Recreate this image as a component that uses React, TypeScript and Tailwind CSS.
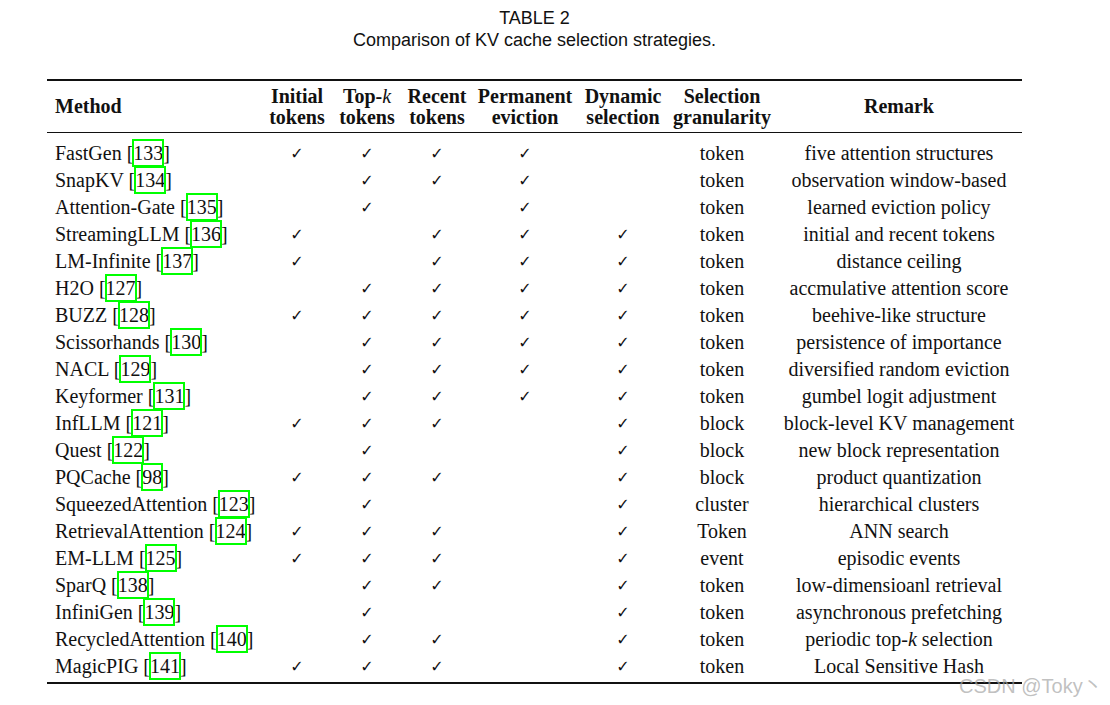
import React from "react";

type Row = [string, string, string, string, React.ReactNode];

const rows: Row[] = [
  ["FastGen", "133", "ITRP_", "token", "five attention structures"],
  ["SnapKV", "134", "_TRP_", "token", "observation window-based"],
  ["Attention-Gate", "135", "_T_P_", "token", "learned eviction policy"],
  ["StreamingLLM", "136", "I_RPD", "token", "initial and recent tokens"],
  ["LM-Infinite", "137", "I_RPD", "token", "distance ceiling"],
  ["H2O", "127", "_TRPD", "token", "accmulative attention score"],
  ["BUZZ", "128", "ITRPD", "token", "beehive-like structure"],
  ["Scissorhands", "130", "_TRPD", "token", "persistence of importance"],
  ["NACL", "129", "_TRPD", "token", "diversified random eviction"],
  ["Keyformer", "131", "_TRPD", "token", "gumbel logit adjustment"],
  ["InfLLM", "121", "ITR_D", "block", "block-level KV management"],
  ["Quest", "122", "_T__D", "block", "new block representation"],
  ["PQCache", "98", "ITR_D", "block", "product quantization"],
  ["SqueezedAttention", "123", "_T__D", "cluster", "hierarchical clusters"],
  ["RetrievalAttention", "124", "ITR_D", "Token", "ANN search"],
  ["EM-LLM", "125", "ITR_D", "event", "episodic events"],
  ["SparQ", "138", "_TR_D", "token", "low-dimensioanl retrieval"],
  ["InfiniGen", "139", "_T__D", "token", "asynchronous prefetching"],
  [
    "RecycledAttention",
    "140",
    "_TR_D",
    "token",
    <>
      periodic top-<i className="font-['Liberation_Serif',serif]">k</i> selection
    </>,
  ],
  ["MagicPIG", "141", "ITR_D", "token", "Local Sensitive Hash"],
];

const cols =
  "grid grid-cols-[215px_70px_70px_70px_106px_90px_108px_246px]";

function Check({ on }: { on: boolean }) {
  return (
    <div className="flex justify-center">
      {on ? (
        <span className="font-['DejaVu_Sans',sans-serif] text-[16px] leading-[27px] text-[#111]">
          ✓
        </span>
      ) : null}
    </div>
  );
}

function Cite({ n }: { n: string }) {
  return (
    <span className="relative inline-block leading-[27px]">
      {n}
      <span className="absolute -left-[1px] -right-[1px] top-[-1px] bottom-0 border-2 border-[#00ff00]" />
    </span>
  );
}

export default function App() {
  return (
    <div className="relative w-[1110px] h-[705px] bg-white overflow-hidden text-[#111]">
      <div className="w-[975px] ml-[47px] pt-[7px]">
        <div className="text-center font-['Liberation_Sans',Arial,sans-serif] text-[18px] leading-[22px] text-[#111]">
          <div>TABLE 2</div>
          <div>Comparison of KV cache selection strategies.</div>
        </div>

        <div className="mt-[28px] border-t-2 border-b-2 border-[#111] font-['Liberation_Serif',serif] text-[20px]">
          <div
            className={`${cols} h-[52px] items-center border-b border-[#111] font-bold leading-[21px]`}
          >
            <div className="pl-[8px]">Method</div>
            <div className="text-center">
              Initial
              <br />
              tokens
            </div>
            <div className="text-center">
              Top-<i className="font-normal">k</i>
              <br />
              tokens
            </div>
            <div className="text-center">
              Recent
              <br />
              tokens
            </div>
            <div className="text-center">
              Permanent
              <br />
              eviction
            </div>
            <div className="text-center">
              Dynamic
              <br />
              selection
            </div>
            <div className="text-center">
              Selection
              <br />
              granularity
            </div>
            <div className="text-center">Remark</div>
          </div>

          <div className="pt-[7px] pb-[2px]">
            {rows.map(([name, ref, flags, gran, remark]) => (
              <div
                key={name}
                className={`${cols} h-[27px] items-center leading-[27px]`}
              >
                <div className="pl-[8px] whitespace-nowrap">
                  {name} [<Cite n={ref} />]
                </div>
                <Check on={flags[0] !== "_"} />
                <Check on={flags[1] !== "_"} />
                <Check on={flags[2] !== "_"} />
                <Check on={flags[3] !== "_"} />
                <Check on={flags[4] !== "_"} />
                <div className="text-center">{gran}</div>
                <div className="text-center whitespace-nowrap">{remark}</div>
              </div>
            ))}
          </div>
        </div>
      </div>

      <div className="absolute left-[959px] top-[674px] font-['Liberation_Sans','Noto_Sans_CJK_SC',sans-serif] text-[20px] leading-[24px] text-[rgba(165,165,165,0.7)] whitespace-nowrap">
        CSDN @Toky丶
      </div>
    </div>
  );
}
